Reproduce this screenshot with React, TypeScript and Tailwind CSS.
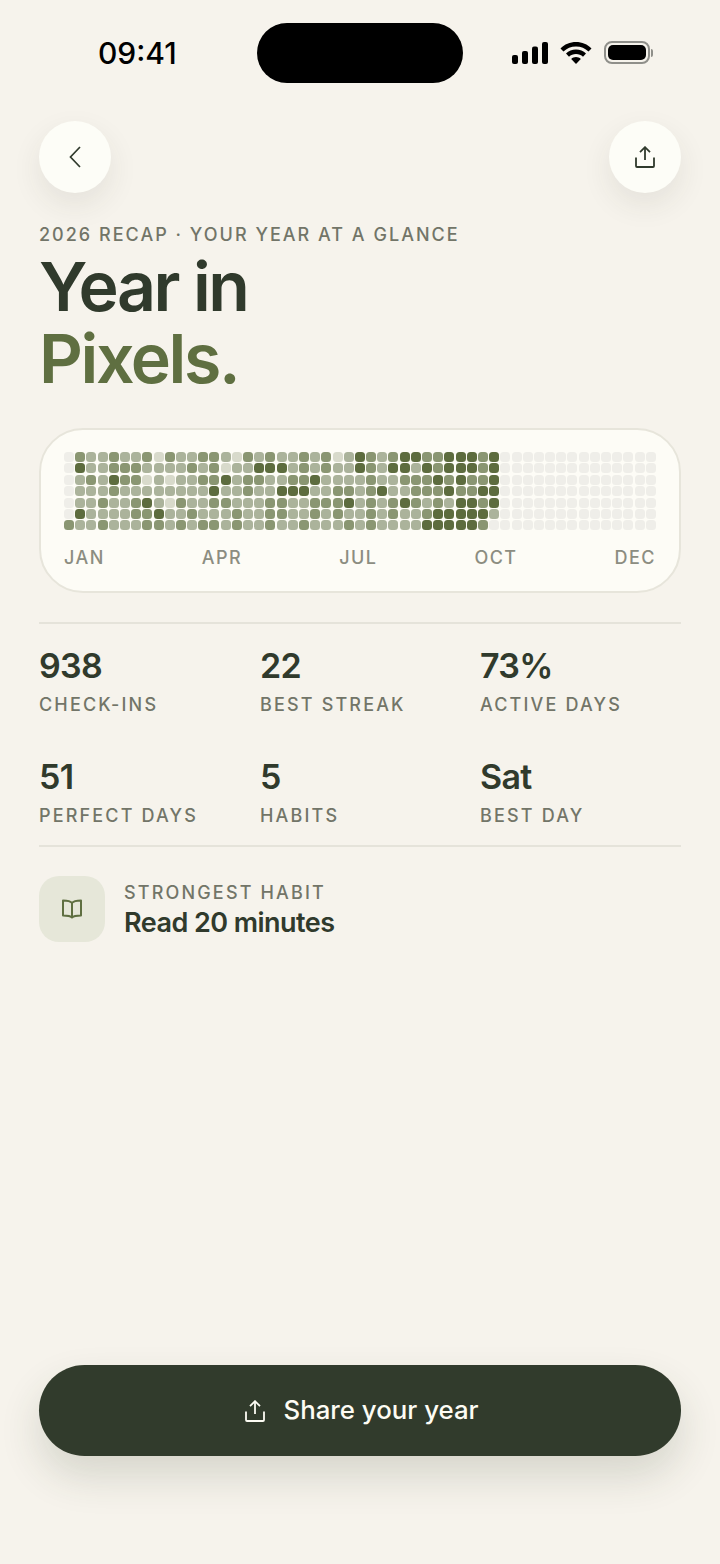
const days = [
    '0322322313223321323' + '22323124323443344434',
    '0422333222232312244' + '42323224324424344434',
    '0232433121223342332' + '23342222322333434334',
    '0222322222222422322' + '44422332342233343344',
    '0223223421322332223' + '32233342323432324434',
    '0422223342232223223' + '32232322323223444442',
    '3223222332323323223' + '22322232322224444430',
];

const levelClass: Record<string, string> = {
    '0': 'bg-[#efeee9]',
    '1': 'bg-[#d8dacb]',
    '2': 'bg-[#abb39b]',
    '3': 'bg-[#8a9672]',
    '4': 'bg-[#5d6c3e]',
};

const stats = [
    { value: '938', label: 'CHECK-INS' },
    { value: '22', label: 'BEST STREAK' },
    { value: '73%', label: 'ACTIVE DAYS' },
    { value: '51', label: 'PERFECT DAYS' },
    { value: '5', label: 'HABITS' },
    { value: 'Sat', label: 'BEST DAY' },
];

const months = ['JAN', 'APR', 'JUL', 'OCT', 'DEC'];

function ShareIcon({ className }: { className?: string }) {
    return (
        <svg viewBox="0 0 20 22" fill="none" stroke="currentColor" strokeWidth="1.8" className={className}>
            <path d="M10 14V1.5" />
            <path d="M5 6.2 10 1.2l5 5" />
            <path d="M1 11.5V20a1 1 0 0 0 1 1h16a1 1 0 0 0 1-1v-8.5" />
        </svg>
    );
}

function BookIcon({ className }: { className?: string }) {
    return (
        <svg viewBox="0 0 20 20" fill="none" stroke="currentColor" strokeWidth="2" strokeLinejoin="round" className={className}>
            <path d="M10 4C8.500 2 6 1.500 1 1.500v15c5 0 7.500.5 9 2 1.500-1.500 4-2 9-2v-15c-5 0-7.500.5-9 2.500Z" />
            <path d="M10 4v14.500" />
        </svg>
    );
}

function StatusIcons() {
    return (
        <div className="flex items-center gap-[12px]">
            <svg width="36" height="22" viewBox="0 0 36 22" fill="currentColor">
                <rect x="0" y="13" width="6" height="9" rx="2" />
                <rect x="10" y="9" width="6" height="13" rx="2" />
                <rect x="20" y="4.5" width="6" height="17.5" rx="2" />
                <rect x="30" y="0" width="6" height="22" rx="2" />
            </svg>
            <svg width="32" height="22" viewBox="0 0 32 22" fill="currentColor">
                <path d="M16 0C10 0 4.500 2.400 0.500 6.400l3 3.200C6.700 6.400 11.100 4.500 16 4.500s9.300 1.900 12.500 5.100l3-3.200C27.500 2.400 22 0 16 0Z" />
                <path d="M16 7.500c-3.900 0-7.400 1.500-10 4l3 3.200c1.800-1.700 4.300-2.700 7-2.700s5.200 1 7 2.700l3-3.200c-2.600-2.500-6.100-4-10-4Z" />
                <path d="M16 15c-1.800 0-3.500.7-4.800 1.900L16 22l4.800-5.100C19.500 15.700 17.800 15 16 15Z" />
            </svg>
            <div className="flex items-center gap-[1px]">
                <div className="h-[23px] w-[46px] rounded-[8px] border-2 border-[#8f8f8a] p-[2px]">
                    <div className="h-full w-full rounded-[5px] bg-black" />
                </div>
                <div className="h-[8px] w-[2px] rounded-r-full bg-[#8f8f8a]" />
            </div>
        </div>
    );
}

export default function App() {
    return (
        <div className="flex min-h-[1564px] flex-col bg-[#f6f3ec] font-['Inter',sans-serif] text-[#303a2c]">
            <div className="grid h-[121px] grid-cols-[257px_206px_257px] items-start pt-[23px]">
                <span className="mt-[12px] pl-[98px] text-[30px] font-medium leading-[36px] text-black">09:41</span>
                <div className="h-[60px] rounded-[30px] bg-black" />
                <div className="mt-[18px] flex justify-end pr-[67px] text-black">
                    <StatusIcons />
                </div>
            </div>

            <div className="flex flex-1 flex-col px-[39px] pb-[108px]">
                <div className="flex justify-between">
                    <button className="flex h-[72px] w-[72px] items-center justify-center rounded-full bg-[#fdfdf7] shadow-[0_12px_30px_rgba(60,60,40,0.09)]">
                        <svg width="12" height="22" viewBox="0 0 12 22" fill="none" stroke="currentColor" strokeWidth="1.7">
                            <path d="M11 1 1.500 11 11 21" />
                        </svg>
                    </button>
                    <button className="flex h-[72px] w-[72px] items-center justify-center rounded-full bg-[#fdfdf7] shadow-[0_12px_30px_rgba(60,60,40,0.09)]">
                        <ShareIcon className="h-[22px] w-[20px]" />
                    </button>
                </div>

                <div className="mt-[31px] text-[18px] font-medium leading-[22px] tracking-[0.112em] text-[#727568]">
                    2026 RECAP · YOUR YEAR AT A GLANCE
                </div>
                <h1 className="mt-[4px] text-[68px] font-semibold leading-[72px] tracking-[-0.035em]">
                    Year in
                    <br />
                    <span className="text-[#5f6f41]">Pixels.</span>
                </h1>

                <div className="mt-[34px] rounded-[44px] border-2 border-[#e7e5db] bg-[#fdfcf6] px-[23px] pb-[22px] pt-[22px]">
                    <div className="grid grid-flow-col grid-cols-[repeat(53,10px)] grid-rows-[repeat(7,10px)] justify-between gap-y-[1.4px]">
                        {Array.from({ length: 53 }).flatMap((_, week) =>
                            days.map((row, day) => (
                                <div
                                    key={`${week}-${day}`}
                                    className={`rounded-[3.5px] ${levelClass[row[week] ?? '0']}`}
                                />
                            ))
                        )}
                    </div>
                    <div className="mt-[17px] flex justify-between text-[18px] font-medium leading-[22px] tracking-[0.08em] text-[#8c8d81]">
                        {months.map((m) => (
                            <span key={m}>{m}</span>
                        ))}
                    </div>
                </div>

                <div className="mt-[29px] grid grid-cols-[221px_220px_1fr] gap-y-[39px] border-y-2 border-[#e5e3da] pb-[18px] pt-[20px]">
                    {stats.map((s) => (
                        <div key={s.label}>
                            <div className="text-[34px] font-semibold leading-[44px] tracking-[-0.02em]">{s.value}</div>
                            <div className="mt-[6px] text-[18px] font-medium leading-[22px] tracking-[0.12em] text-[#727568]">
                                {s.label}
                            </div>
                        </div>
                    ))}
                </div>

                <div className="mt-[29px] flex items-start gap-[19px]">
                    <div className="flex h-[66px] w-[66px] items-center justify-center rounded-[20px] bg-[#e6e7d9] text-[#5f6f41]">
                        <BookIcon className="h-[20px] w-[20px]" />
                    </div>
                    <div className="pt-[6px]">
                        <div className="text-[18px] font-medium leading-[22px] tracking-[0.12em] text-[#727568]">
                            STRONGEST HABIT
                        </div>
                        <div className="mt-[2px] text-[27px] font-semibold leading-[34px] tracking-[-0.02em]">
                            Read 20 minutes
                        </div>
                    </div>
                </div>

                <button className="mt-auto flex h-[91px] items-center justify-center gap-[18px] rounded-full bg-[#313b2c] pl-[4px] text-[25.8px] font-medium text-[#fdfcf4] shadow-[0_20px_40px_rgba(50,60,40,0.16)]">
                    <ShareIcon className="h-[22px] w-[20px]" />
                    Share your year
                </button>
            </div>
        </div>
    );
}
